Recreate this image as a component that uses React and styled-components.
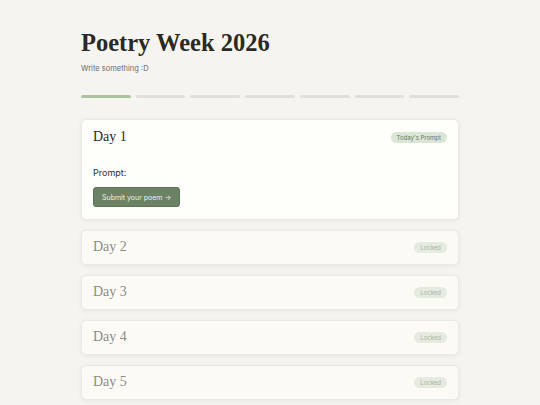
import styled, { createGlobalStyle } from "styled-components"

const days = [1, 2, 3, 4, 5, 6, 7]

export default function App() {
    return (
        <>
            <Global />
            <Page>
                <Title>Poetry Week 2026</Title>
                <Subtitle>Write something :D</Subtitle>
                <Progress>
                    {days.map((d) => <Segment key={d} done={d === 1} />)}
                </Progress>
                <List>
                    <Card>
                        <CardHead>
                            <DayName>Day 1</DayName>
                            <Badge>Today's Prompt</Badge>
                        </CardHead>
                        <PromptLabel>Prompt:</PromptLabel>
                        <Button>Submit your poem →</Button>
                    </Card>
                    {days.slice(1).map((d) => (
                        <Card key={d} locked>
                            <CardHead>
                                <DayName locked>Day {d}</DayName>
                                <Badge locked>Locked</Badge>
                            </CardHead>
                        </Card>
                    ))}
                </List>
            </Page>
        </>
    )
}

const Global = createGlobalStyle`
body {
    margin: 0;
    background: #f6f4f0;
    font-family: Inter, "Liberation Sans", sans-serif;
    overflow: hidden;
}
`
const Page = styled.div`
width: 378px;
margin: 0 auto;
padding-top: 28px;
`
const Title = styled.h1`
margin: 0;
font-family: "Liberation Serif", serif;
font-weight: 700;
font-size: 24.5px;
line-height: 30px;
color: #2b2925;
`
const Subtitle = styled.p`
margin: 6px 0 0;
font-size: 7.5px;
color: #6c6a66;
`
const Progress = styled.div`
display: flex;
gap: 5px;
margin-top: 22px;
`
const Segment = styled.div`
flex: 1;
height: 3px;
border-radius: 2px;
background: ${(p) => (p.done ? "#adc4a2" : "#e0dfdc")};
`
const List = styled.div`
display: flex;
flex-direction: column;
gap: 10px;
margin-top: 21px;
`
const Card = styled.div`
background: ${(p) => (p.locked ? "#fbfaf5" : "#fefefb")};
border: 1px solid #ebe9e3;
border-radius: 5px;
box-shadow: 0 1px 4px rgba(80, 70, 50, 0.08);
padding: ${(p) => (p.locked ? "7px 11px 8px" : "8px 11px 12px")};
`
const CardHead = styled.div`
display: flex;
justify-content: space-between;
align-items: center;
`
const DayName = styled.h2`
margin: 0;
font-family: "Liberation Serif", serif;
font-weight: 400;
font-size: 14px;
line-height: 18px;
color: ${(p) => (p.locked ? "#8f8c86" : "#2b2925")};
`
const Badge = styled.span`
font-size: 6px;
line-height: 11px;
padding: 0 6px;
border-radius: 6px;
background: ${(p) => (p.locked ? "#e6ebe1" : "#dce6d6")};
color: ${(p) => (p.locked ? "#a7b39f" : "#66795d")};
`
const PromptLabel = styled.p`
margin: 21px 0 0;
font-size: 9px;
color: #2f2d2a;
`
const Button = styled.button`
margin-top: 9px;
height: 20px;
padding: 0 8px;
border: 1px solid #5d7257;
border-radius: 3px;
background: #6b8264;
color: #eef1ea;
font-family: Inter, "Liberation Sans", sans-serif;
font-size: 7px;
cursor: pointer;
`
